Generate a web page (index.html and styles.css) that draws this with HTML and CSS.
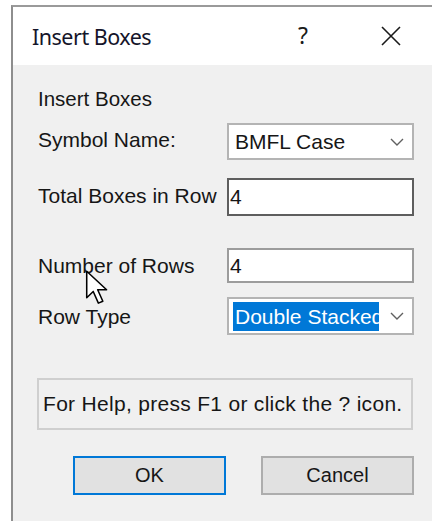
FILE: index.html
```html
<!DOCTYPE html>
<html lang="en">
<head>
<meta charset="utf-8">
<title>Insert Boxes</title>
<link rel="stylesheet" href="styles.css">
</head>
<body>
<div class="dialog">
  <div class="titlebar">
    <span class="title">Insert Boxes</span>
    <span class="title-help">?</span>
    <svg class="title-close" viewBox="0 0 20 20" width="20" height="20" aria-hidden="true">
      <path d="M1 1 L19 19 M19 1 L1 19" stroke="#1a1a1a" stroke-width="1.6" fill="none"/>
    </svg>
  </div>
  <div class="content">
    <div class="group-label">Insert Boxes</div>

    <div class="row row-symbol">
      <span class="label">Symbol Name:</span>
      <div class="combo">
        <span class="combo-text">BMFL Case</span>
        <svg class="chevron" viewBox="0 0 14 8" width="14" height="8" aria-hidden="true">
          <path d="M1 1 L7 7 L13 1" stroke="#606060" stroke-width="1.4" fill="none"/>
        </svg>
      </div>
    </div>

    <div class="row row-total">
      <span class="label">Total Boxes in Row</span>
      <div class="textbox">4</div>
    </div>

    <div class="row row-count">
      <span class="label">Number of Rows</span>
      <div class="textbox textbox-light">4</div>
    </div>

    <div class="row row-type">
      <span class="label">Row Type</span>
      <div class="combo">
        <span class="combo-text combo-selected">Double Stacked</span>
        <svg class="chevron" viewBox="0 0 14 8" width="14" height="8" aria-hidden="true">
          <path d="M1 1 L7 7 L13 1" stroke="#606060" stroke-width="1.4" fill="none"/>
        </svg>
      </div>
    </div>

    <div class="helpbox">For Help, press F1 or click the ? icon.</div>

    <div class="buttons">
      <div class="btn btn-default">OK</div>
      <div class="btn">Cancel</div>
    </div>
  </div>
</div>

<!-- mouse pointer resting over the "Number of Rows" label -->
<svg class="pointer" viewBox="0 0 14 21" width="24" height="37" aria-hidden="true">
  <path d="M1 1 L1 16.5 L4.8 12.8 L7.8 19.6 L10.4 18.5 L7.4 11.8 L12.6 11.8 Z" fill="#fff" stroke="#000" stroke-width="0.9" stroke-linejoin="round"/>
</svg>
</body>
</html>
```

FILE: styles.css
```css
html, body {
  margin: 0;
  padding: 0;
  background: #ffffff;
  overflow: hidden;
}

body {
  position: relative;
  width: 432px;
  height: 521px;
  font-family: "Liberation Sans", Arial, sans-serif;
  color: #161616;
}

.dialog {
  margin: 5px 0 0 11px;
  width: 440px;
  height: 520px;
  border-top: 2px solid #9a9a9a;
  border-left: 2px solid #8e8e8e;
  display: flex;
  flex-direction: column;
}

/* window caption */
.titlebar {
  height: 58px;
  flex: none;
  background: #ffffff;
  display: flex;
  align-items: center;
  padding-left: 19px;
}

.title {
  font-family: "Noto Sans", "Open Sans", sans-serif;
  font-size: 21.5px;
  letter-spacing: -0.5px;
  color: #15152a;
  width: 266px;
}

.title-help {
  font-family: "Noto Sans", "Open Sans", sans-serif;
  font-size: 23px;
  color: #1a1a1a;
  width: 83px;
  margin-top: -2px;
}

.title-close {
  display: block;
}

/* dialog client area */
.content {
  flex: 1;
  background: #f0f0f0;
  padding: 24px 0 0 25px;
  font-size: 21px;
}

.group-label {
  height: 20px;
  line-height: 20px;
  font-size: 20.5px;
}

.row {
  display: grid;
  grid-template-columns: 189px 187px;
  align-items: center;
}

.row-symbol { margin-top: 14px; height: 37px; }
.row-total  { margin-top: 18px; height: 38px; }
.row-count  { margin-top: 32px; height: 35px; }
.row-type   { margin-top: 14px; height: 38px; }

.label {
  line-height: 20px;
  margin-top: -3px;
}

.row-count .label { margin-top: 0; }
.row-type .label { margin-top: 2px; }

.combo,
.textbox {
  box-sizing: border-box;
  height: 100%;
  background: #ffffff;
  display: flex;
  align-items: center;
}

.combo {
  border: 2px solid #b4b4b4;
  padding: 0 8px 0 4px;
}

.combo-text {
  width: 144px;
  padding-left: 2px;
  white-space: nowrap;
  overflow: hidden;
  line-height: 26px;
}

.combo-selected {
  background: #0078d7;
  color: #ffffff;
  line-height: 29px;
}

.chevron {
  margin-left: auto;
  display: block;
}

.textbox {
  border: 2px solid #5e5e5e;
  padding-left: 1px;
}

.textbox-light {
  border-color: #9c9c9c;
}

.helpbox {
  box-sizing: border-box;
  margin: 43px 0 0 -1px;
  width: 376px;
  height: 52px;
  border: 2px solid #cfcfcf;
  display: flex;
  align-items: center;
  padding-left: 4px;
  font-size: 21px;
  letter-spacing: 0.3px;
  white-space: nowrap;
}

.buttons {
  margin: 26px 0 0 35px;
  display: flex;
  gap: 35px;
}

.btn {
  box-sizing: border-box;
  width: 153px;
  height: 39px;
  background: #e1e1e1;
  border: 2px solid #adadad;
  display: flex;
  align-items: center;
  justify-content: center;
  font-size: 20px;
}

.btn-default {
  border-color: #0078d7;
}

.pointer {
  position: absolute;
  left: 85px;
  top: 269px;
}
```
